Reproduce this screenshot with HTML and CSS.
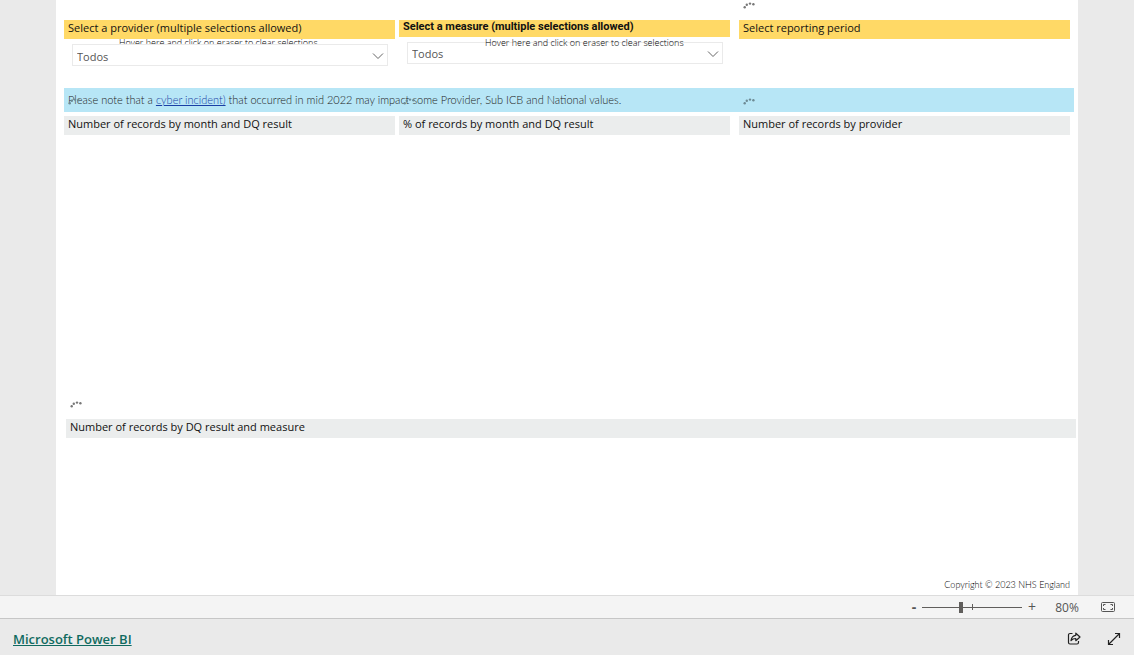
FILE: index.html
```html
<!DOCTYPE html>
<html lang="en">
<head>
<meta charset="utf-8">
<meta name="viewport" content="width=device-width, initial-scale=1">
<title>Microsoft Power BI</title>
<link rel="stylesheet" href="styles.css">
</head>
<body>
<svg class="defs" aria-hidden="true">
  <symbol id="dots" viewBox="0 0 12 8">
    <circle cx="1.7" cy="6.3" r="1.2"/><circle cx="3.8" cy="3.8" r="1.2"/><circle cx="7" cy="2.6" r="1.2"/><circle cx="10.4" cy="3.2" r="1.2"/>
  </symbol>
  <symbol id="chevron" viewBox="0 0 12 8">
    <path d="M1 1.5l5 5 5-5" fill="none" stroke="#666" stroke-width="1"/>
  </symbol>
</svg>
<main class="stage">
  <div class="report">
    <section class="filters">
      <div class="filter">
        <label class="title title-yellow" for="provider">Select a provider (multiple selections allowed)</label>
        <span class="hint">Hover here and click on eraser to clear selections</span>
        <div class="dropdown">
          <select id="provider"><option>Todos</option></select>
          <svg class="chevron"><use href="#chevron"/></svg>
        </div>
      </div>
      <div class="filter filter-measure">
        <label class="title title-yellow title-bold" for="measure">Select a measure (multiple selections allowed)</label>
        <span class="hint">Hover here and click on eraser to clear selections</span>
        <div class="dropdown">
          <select id="measure"><option>Todos</option></select>
          <svg class="chevron"><use href="#chevron"/></svg>
        </div>
      </div>
      <div class="filter filter-period">
        <svg class="dots"><use href="#dots"/></svg>
        <h2 class="title title-yellow">Select reporting period</h2>
      </div>
    </section>
    <p class="notice">Please note that a <a href="#incident">cyber incident)</a> that occurred in mid 2022 may impact some Provider, Sub ICB and National values.</p>
    <section class="charts">
      <div class="chart"><svg class="dots"><use href="#dots"/></svg><h2 class="title">Number of records by month and DQ result</h2></div>
      <div class="chart"><svg class="dots"><use href="#dots"/></svg><h2 class="title">% of records by month and DQ result</h2></div>
      <div class="chart chart-provider"><svg class="dots"><use href="#dots"/></svg><h2 class="title">Number of records by provider</h2></div>
    </section>
    <section class="summary">
      <svg class="dots"><use href="#dots"/></svg>
      <h2 class="title">Number of records by DQ result and measure</h2>
    </section>
    <p class="copyright">Copyright © 2023 NHS England</p>
  </div>
</main>
<div class="zoombar">
  <button class="step" type="button" aria-label="Zoom out"><b>-</b></button>
  <div class="slider">
    <input type="range" min="0" max="100" value="39" aria-label="Zoom">
  </div>
  <button class="step" type="button" aria-label="Zoom in">+</button>
  <button class="percent" type="button">80%</button>
  <button class="icon" type="button" aria-label="Fit to page">
    <svg width="14" height="10" viewBox="0 0 14 10" fill="none" stroke="#555"><rect x=".5" y=".5" width="13" height="9" rx="1"/><path d="M4.500 2.500h-2v1.500M2.500 6v1.500h2M9.500 2.500h2V4M11.500 6v1.500h-2"/></svg>
  </button>
</div>
<footer class="footer">
  <a class="brand" href="#powerbi">Microsoft Power BI</a>
  <div class="actions">
    <button class="icon" type="button" aria-label="Share">
      <svg width="14" height="14" viewBox="0 0 14 14" fill="none" stroke="#222" stroke-width="1.200" stroke-linejoin="round"><path d="M5.500 1.500H3A1.500 1.500 0 0 0 1.500 3v7.500A1.500 1.500 0 0 0 3 12h7a1.500 1.500 0 0 0 1.500-1.500V9"/><path d="M8.800 1.200L13 5 8.800 8.700V6.500C6.800 6.500 5.200 7.100 4 8.700 4.400 5.700 6 3.500 8.800 3.300z"/></svg>
    </button>
    <button class="icon" type="button" aria-label="Full screen">
      <svg width="14" height="14" viewBox="0 0 14 14" fill="none" stroke="#222" stroke-width="1.200"><path d="M1.500 12.500l11-11M8 1.500h4.500V6M1.500 8v4.500H6"/></svg>
    </button>
  </div>
</footer>
</body>
</html>
```
FILE: styles.css
```css
* { box-sizing: border-box; }
body {
  margin: 0;
  min-height: 100vh;
  display: flex;
  flex-direction: column;
  background: #eaeaea;
  color: #111;
  font-family: "Open Sans", "Noto Sans", sans-serif;
  font-size: 11px;
}
h2, p { margin: 0; }
button { padding: 0; border: 0; background: none; font: inherit; color: inherit; }
.defs { position: absolute; width: 0; height: 0; }
.stage { flex: 1; display: flex; padding: 0 56px; }
.report {
  flex: 1;
  display: flex;
  flex-direction: column;
  padding: 20px 8px 3px;
  background: #fff;
}
.filters, .charts {
  display: grid;
  grid-template-columns: 1fr 1fr 1px 1fr;
  column-gap: 4px;
}
.filters { min-height: 68px; }
.filter-period, .chart-provider { grid-column: 4; }
.filter, .chart, .summary { position: relative; }
.title {
  position: relative;
  z-index: 1;
  display: block;
  height: 19px;
  padding: 0 4px;
  background: #ebeded;
  font-size: 11px;
  font-weight: 400;
  line-height: 16px;
  white-space: nowrap;
}
.title-yellow { background: #ffd966; }
.title-bold {
  height: 17px;
  line-height: 14px;
  font-family: Roboto, "Liberation Sans", sans-serif;
  font-weight: 700;
}
.hint {
  position: absolute;
  top: 16px;
  left: 55px;
  color: #000;
  font-size: 9px;
  font-weight: 300;
  line-height: 14px;
  white-space: nowrap;
}
.filter-measure .hint { left: 86px; z-index: 1; }
.dropdown { position: relative; margin: 5px 7px 0 8px; }
.dropdown select {
  display: block;
  width: 100%;
  height: 22px;
  padding: 2px 4px 0;
  border: 1px solid #eaeaea;
  border-radius: 0;
  appearance: none;
  background: #fff;
  color: #555;
  font: inherit;
}
.filter-measure select { padding-top: 0; }
.chevron { position: absolute; top: 8px; right: 4px; width: 12px; height: 8px; pointer-events: none; }
.dots { position: absolute; top: -19px; left: 4px; width: 12px; height: 8px; fill: #777; }
.charts .dots { fill: #6d8a94; }
.notice {
  height: 24px;
  padding: 0 4px;
  margin-right: -4px;
  background: #b7e6f6;
  color: #222;
  font-family: Lato, "Open Sans", sans-serif;
  font-weight: 300;
  line-height: 24px;
  white-space: nowrap;
}
.notice a { color: #1a3fa5; }
.charts { margin-top: 4px; min-height: 303px; }
.summary { margin: 0 -6px 0 2px; }
.copyright {
  margin-top: auto;
  color: #000;
  font-family: Lato, "Open Sans", sans-serif;
  font-size: 9px;
  font-weight: 300;
  line-height: 14px;
  text-align: right;
}
.zoombar {
  height: 24px;
  display: flex;
  align-items: center;
  justify-content: flex-end;
  padding-right: 19px;
  border-top: 1px solid #dcdcdc;
  border-bottom: 1px solid #c6c6c6;
  background: #f4f4f4;
  color: #555;
  font-size: 12px;
}
.step { width: 14px; font-size: 14px; line-height: 20px; }
.slider { position: relative; width: 100px; height: 12px; margin: 0 3px 0 1px; }
.slider::after { content: ""; position: absolute; left: 50px; top: 3px; width: 1px; height: 6px; background: #605e5c; }
.slider input {
  display: block;
  width: 100%;
  height: 12px;
  margin: 0;
  appearance: none;
  background: linear-gradient(#605e5c, #605e5c) center / 100% 1px no-repeat;
}
.slider input::-webkit-slider-thumb { appearance: none; width: 4px; height: 11px; background: #605e5c; }
.percent { width: 24px; margin: 0 22px 0 16px; }
.icon { display: flex; }
.footer {
  height: 36px;
  display: flex;
  align-items: center;
  justify-content: space-between;
  padding: 4px 13px 0;
}
.brand { color: #106a60; font-size: 13px; font-weight: 600; }
.actions { display: flex; gap: 26px; }
```
